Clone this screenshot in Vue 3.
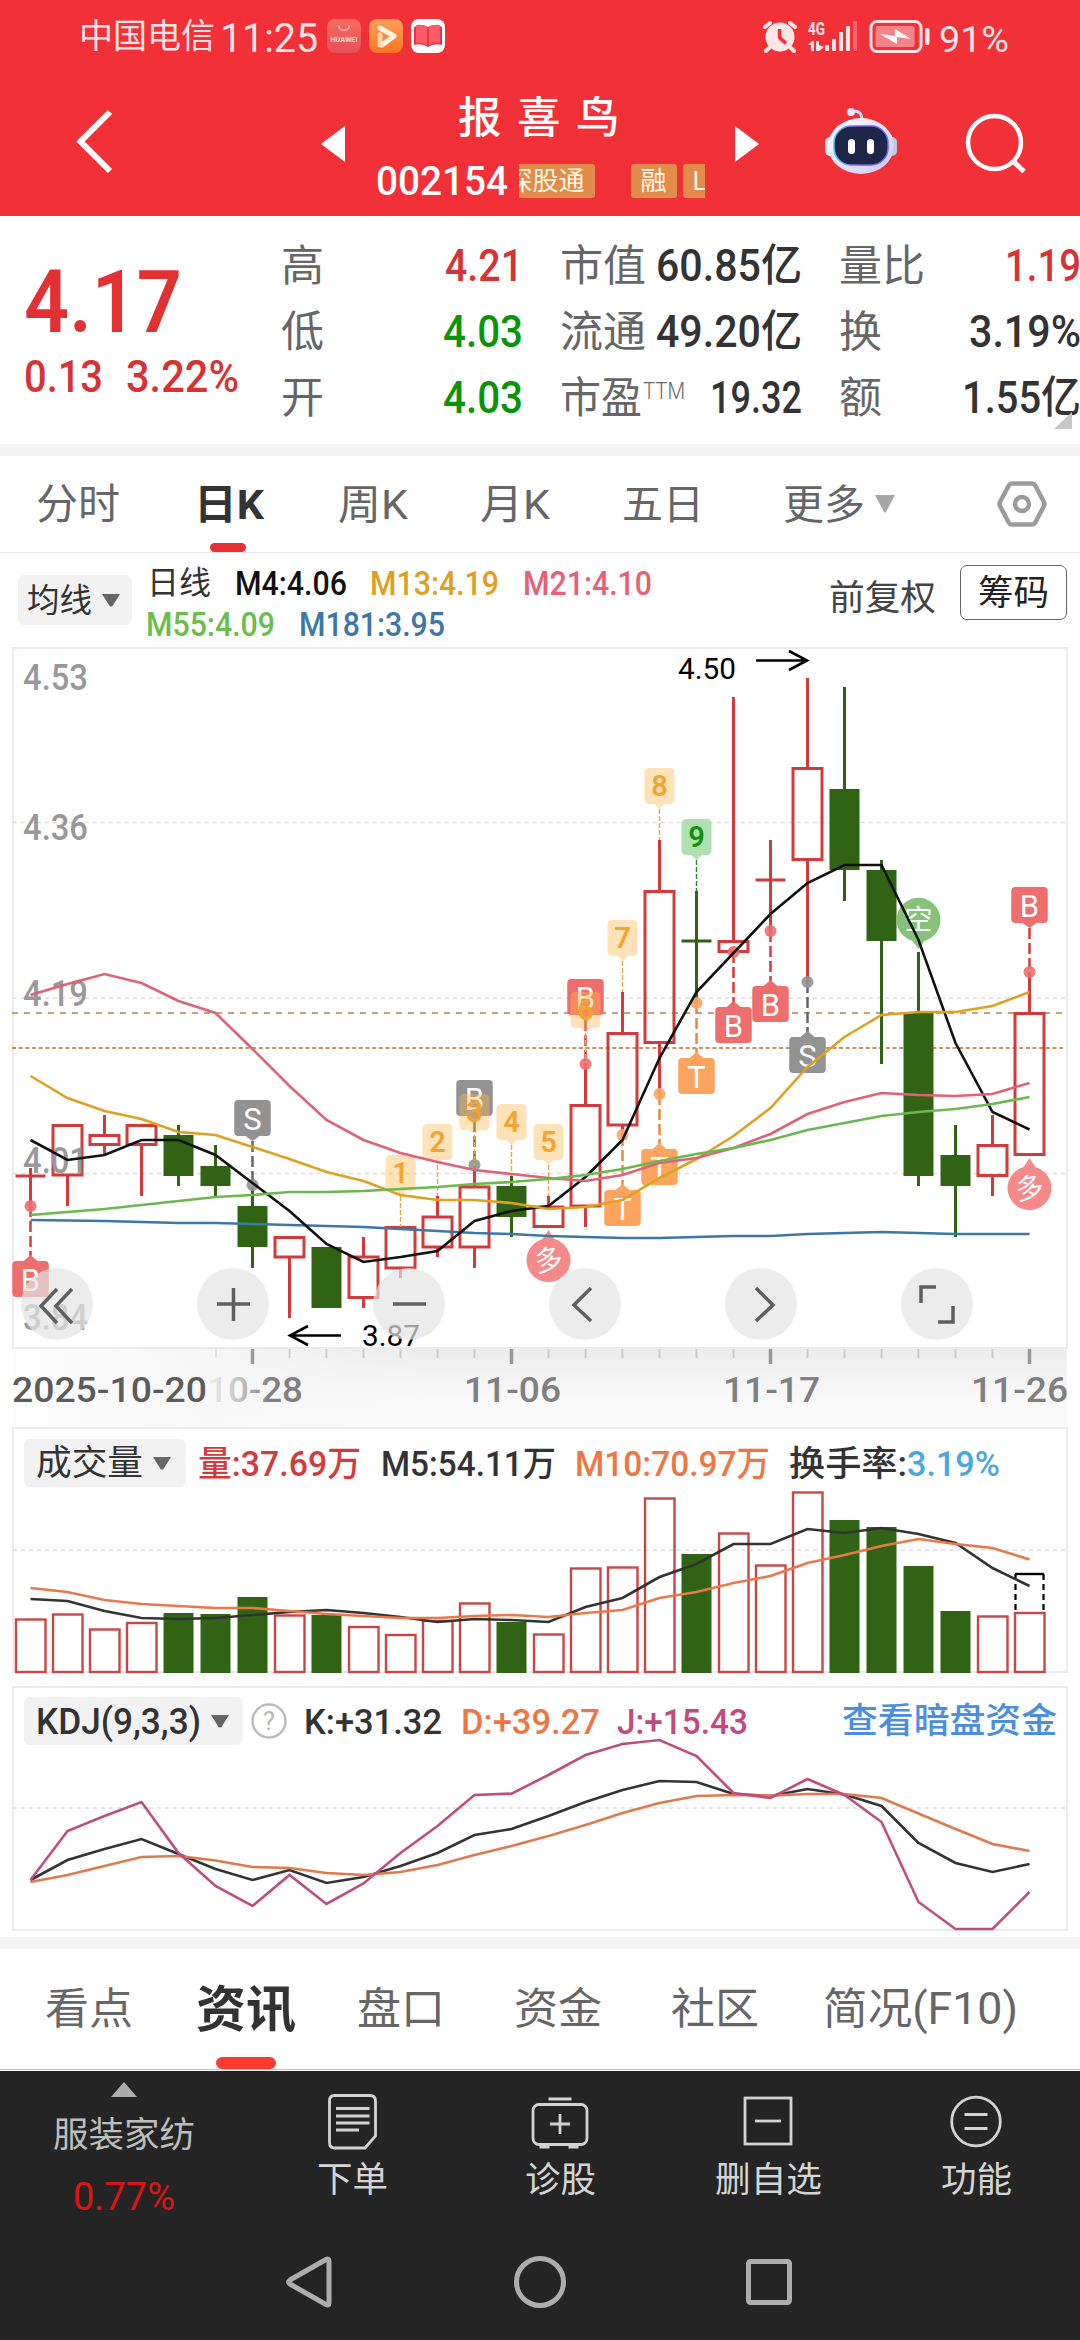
<script setup>
import { h } from 'vue'

// Single line of text fitted to a given width, centred on its cap height.
const Txt = (p) =>
  h('svg', { width: p.w, height: p.s, style: 'overflow:visible;flex:none;display:block' }, [
    h('text', {
      x: 0,
      y: p.s * 0.855,
      'font-size': p.s,
      'font-weight': p.b || 400,
      fill: p.c || 'currentColor',
      textLength: p.w,
      lengthAdjust: 'spacingAndGlyphs'
    }, p.t)
  ])

const X = (i) => 30.5 + 37 * i
const line = (ys) => ys.map((y, i) => (y === null ? '' : `${X(i)},${y}`)).join(' ')

// [kind, bodyTop, bodyBottom, high, low]
const candles = [
  ['d', 1176, 1176, 1168, 1206], ['r', 1125.5, 1175, 1125, 1206], ['r', 1135.5, 1144.5, 1115, 1154],
  ['r', 1125.5, 1144.5, 1125, 1196], ['g', 1135, 1176, 1125, 1186], ['g', 1166, 1186, 1145, 1196],
  ['g', 1206, 1247, 1187, 1268], ['r', 1237.5, 1257, 1237, 1318], ['g', 1247, 1308, 1247, 1308],
  ['r', 1257, 1297.5, 1237, 1308], ['r', 1227.5, 1268, 1227, 1278], ['r', 1217, 1247, 1196, 1257],
  ['r', 1187, 1247, 1166, 1268], ['g', 1186, 1217, 1176, 1237], ['r', 1207, 1226.5, 1196, 1227],
  ['r', 1105.5, 1206, 1063, 1227], ['r', 1033.5, 1125, 992, 1135], ['r', 891.5, 1042.5, 840, 1094],
  ['e', 941, 941, 891, 1003], ['r', 941.5, 951.5, 697, 952], ['d', 880, 880, 840, 931],
  ['r', 768.5, 859.5, 678, 982], ['g', 789, 870, 687, 901], ['g', 870, 941, 860, 1064],
  ['g', 1013, 1176, 952, 1186], ['g', 1155, 1186, 1125, 1237], ['r', 1145.5, 1175.5, 1115, 1196],
  ['r', 1013.5, 1154.5, 972, 1154]
]
const ma = [
  { c: '#3b78a8', y: [1220, 1220.5, 1221, 1222, 1223, 1223, 1224, 1225, 1226, 1227, 1229, 1231, 1233, 1234, 1236, 1237, 1238, 1238, 1237, 1236, 1236, 1234, 1233, 1232, 1233, 1234, 1234, 1234] },
  { c: '#111', y: [1140, 1160, 1155, 1140, 1140, 1155, 1183, 1211, 1244, 1262, 1257, 1251, 1221, 1211, 1206, 1177, 1140, 1058, 992, 953, 914, 883, 865, 865, 940, 1043, 1112, 1129.5] },
  { c: '#e0a020', y: [1076, 1098, 1111, 1119, 1132, 1135, 1147, 1159, 1172, 1181, 1195, 1200, 1200, 1203, 1209, 1207, 1200, 1178, 1159, 1136, 1108, 1067, 1037, 1015, 1012, 1012, 1006, 992] },
  { c: '#e06276', y: [995, 984, 974, 983, 1001, 1013, 1049, 1086, 1120, 1140, 1153, 1162, 1170, 1174, 1178, 1181, 1175, 1163, 1158, 1148, 1134, 1114, 1102, 1093, 1095, 1096, 1094, 1083] },
  { c: '#6bb84e', y: [1215, 1212, 1209, 1205, 1201, 1197, 1195, 1192, 1192, 1191, 1189, 1187, 1184, 1182, 1179, 1175, 1169, 1161, 1154, 1148, 1140, 1130, 1123, 1116, 1112, 1109, 1104, 1097] }
]

// signal tags: column, letter, colour, box top, dot y; box sits above the dot when its top is smaller
const signals = [
  [0, 'B', '#ee6e6e', 1261, 1206], [6, 'S', '#929292', 1100, 1185], [12, 'B', '#929292', 1080, 1165],
  [15, 'B', '#ee6e6e', 979, 1064], [16, 'T', '#fda55f', 1190, 1135], [17, 'T', '#fda55f', 1149, 1094],
  [18, 'T', '#fda55f', 1058, 1003], [19, 'B', '#ee6e6e', 1007, 952], [20, 'B', '#ee6e6e', 986, 931],
  [21, 'S', '#929292', 1037, 982], [27, 'B', '#ee6e6e', 887, 972]
]
const stemColor = { '#ee6e6e': '#d63a3a', '#929292': '#666', '#fda55f': '#e88a3c' }
const up = (s) => s[3] < s[4]
const counts = [
  [10, 1, 1155, 1227], [11, 2, 1124, 1196], [12, 3, 1094, 1166], [13, 4, 1104, 1176],
  [14, 5, 1124, 1196], [15, 6, 992, 1063], [16, 7, 920, 992], [17, 8, 768, 840], [18, 9, 819, 891]
]
const countPath = (i, y) => {
  const x = X(i)
  return `M${x - 10} ${y}h20q5 0 5 5v26q0 5 -5 5h-5l-5 5l-5 -5h-5q-5 0 -5 -5v-26q0 -5 5 -5z`
}
const priceLabels = [['4.53', 690], ['4.36', 840], ['4.19', 1006], ['4.01', 1173], ['3.84', 1330]]

const vol = [1619.5, 1614.5, 1629.5, 1623, 1613, 1614, 1597, 1615.5, 1615, 1627, 1635, 1621, 1603.5, 1622, 1634.5, 1568.5, 1567.5, 1498.5, 1554, 1533.5, 1565.5, 1492.5, 1520, 1527, 1566, 1611, 1616.5, 1613]
const m5 = [1599, 1601, 1611, 1618, 1619, 1618, 1615, 1612, 1610, 1613, 1617, 1622, 1619, 1620, 1622, 1607, 1598, 1577, 1564, 1544, 1544, 1529, 1533, 1528, 1534, 1543, 1568, 1586]
const m10 = [1588, 1592, 1600, 1604, 1606, 1608, 1608, 1611, 1614, 1616, 1618, 1618, 1616, 1615, 1617, 1613, 1610, 1598, 1592, 1583, 1576, 1563, 1555, 1546, 1539, 1544, 1548, 1559.5]
const kLine = [1880, 1860, 1849, 1839, 1854, 1869, 1880, 1870, 1883, 1877, 1866, 1853, 1835, 1829, 1816, 1802, 1790, 1781, 1782, 1794, 1796, 1789, 1794.5, 1806, 1843, 1863, 1872, 1864]
const dLine = [1882, 1875, 1866, 1857, 1856, 1860.5, 1867, 1868, 1873, 1875, 1872, 1865, 1855, 1846, 1836, 1825, 1813, 1803, 1796, 1795, 1795.6, 1794, 1794, 1798, 1813.5, 1829, 1844, 1851]
const jLine = [1880, 1831, 1816, 1802, 1853, 1886, 1906, 1875, 1904, 1883.5, 1853, 1826, 1795, 1793.6, 1775, 1755, 1744, 1740, 1756, 1793, 1798, 1779, 1795, 1822, 1902, 1929, 1929, 1892]

const ticks = Array.from({ length: 22 }, (_, k) => k + 6)
const tools = [
  'M36 21l-16 17l16 17M51 21l-16 17l16 17',
  'M20 36h33M36.500 20v33',
  'M20 36h33',
  'M42 20l-17 17l17 16',
  'M31 20l17 17l-17 16',
  'M20 35V19H35M52 38V54H37'
]
</script>

<template>
  <div class="screen">
    <header class="top">
      <div class="status">
        <Txt class="carrier" t="中国电信" :w="136" :s="34" />
        <Txt class="clock" t="11:25" :w="98" :s="40" />
        <svg class="apps" width="120" height="36" viewBox="0 0 120 36">
          <defs>
            <linearGradient id="hw" x1="0" y1="0" x2="0" y2="1"><stop offset="0" stop-color="#fb6a5f" /><stop offset="1" stop-color="#e4505a" /></linearGradient>
            <linearGradient id="vd" x1="0" y1="0" x2="0" y2="1"><stop offset="0" stop-color="#ffa057" /><stop offset="1" stop-color="#fb7425" /></linearGradient>
          </defs>
          <rect x="0" y="1" width="34" height="34" rx="8" fill="url(#hw)" />
          <path d="M11.500 7c0 7 11 7 11 0" fill="none" stroke="#ffc9c4" stroke-width="1.300" />
          <text x="3.500" y="23.500" textLength="27" lengthAdjust="spacingAndGlyphs" font-size="6.800" font-weight="700" fill="#ffd9d5">HUAWEI</text>
          <rect x="42" y="1" width="34" height="34" rx="8" fill="url(#vd)" />
          <path d="M53 10L67 18L55 27" fill="none" stroke="#fff3e4" stroke-width="5" stroke-linejoin="round" stroke-linecap="round" />
          <path d="M53 17v10" stroke="#ffd6ae" stroke-width="5" stroke-linecap="round" />
          <rect x="84" y="1" width="34" height="34" rx="8" fill="#fff" />
          <path d="M87 9q7 -4 14 0q7 -4 14 0v18q-8 -2 -14 2q-6 -4 -14 -2z" fill="#e03545" />
          <path d="M89 7q7 -1 12 2v19q-5 -4 -12 -3zM113 7q-7 -1 -12 2v19q5 -4 12 -3z" fill="#ff5a66" />
          <path d="M101 9v19" stroke="#d42f40" stroke-width="1.500" />
        </svg>
        <svg class="sys" width="168" height="36" viewBox="763 18 168 36" fill="#ffe6e7">
          <circle cx="780" cy="37" r="14.500" />
          <path d="M765 27l5 -4M795 27l-5 -4M769 48l-3 3M791 48l3 3" stroke="#ffe6e7" stroke-width="4" stroke-linecap="round" />
          <path d="M779.500 29v8.500l6.500 6" fill="none" stroke="#f13038" stroke-width="3.500" />
          <text x="808" y="35" font-size="18" font-weight="700" textLength="17" lengthAdjust="spacingAndGlyphs">4G</text>
          <path d="M808 45l4 -4h2v10h-3v-6zM816 41h3v4l5 2l-5 4h-3z" />
          <rect x="825" y="45" width="4" height="6" rx="1" /><rect x="832" y="39" width="4" height="12" rx="1" />
          <rect x="839" y="32" width="4" height="19" rx="1" /><rect x="846" y="26" width="4" height="25" rx="1" />
          <rect x="853" y="21" width="4" height="30" rx="1" opacity=".3" />
          <rect x="871" y="21.500" width="50" height="30" rx="6" fill="none" stroke="#ffe0e2" stroke-width="3" />
          <rect x="875.500" y="26" width="39" height="21" rx="2" fill="#f68388" />
          <path d="M880 34l15 2v-7l16 10l-14 -2v7z" fill="#fff" />
          <rect x="925" y="28" width="4.500" height="17" rx="2" />
        </svg>
        <Txt class="pct" t="91%" :w="70" :s="37" />
      </div>
      <div class="titlebar">
        <svg width="50" height="80" viewBox="70 101 50 80" class="back"><path d="M110 112L80.500 141.500L110 171" fill="none" stroke="#fff" stroke-width="6" /></svg>
        <svg class="prev" width="24" height="36"><path d="M0 18L24 0V36z" fill="#fff" /></svg>
        <div class="name">
          <div class="cn">报喜鸟</div>
          <div class="code">
            <Txt t="002154" :w="132" :s="41" :b="500" />
            <div class="badges">
              <span class="badge">深股通</span><span class="badge gap">融</span><span class="badge">LOF</span>
            </div>
          </div>
        </div>
        <svg class="next" width="24" height="36"><path d="M24 18L0 0V36z" fill="#fff" /></svg>
        <svg class="robot" width="74" height="70" viewBox="824 106 74 70">
          <defs>
            <linearGradient id="hd" x1="0" y1="0" x2="1" y2="1"><stop offset="0" stop-color="#fff" /><stop offset="1" stop-color="#cbc8f0" /></linearGradient>
            <linearGradient id="rim" x1="0" y1="0" x2="1" y2="0"><stop offset="0" stop-color="#58c6f5" /><stop offset=".5" stop-color="#8a54e8" /><stop offset="1" stop-color="#5b6cf0" /></linearGradient>
          </defs>
          <path d="M851 112q10 -3 11 7" fill="none" stroke="#e2dcf6" stroke-width="3" /><circle cx="851" cy="112" r="4" fill="#eee6fa" />
          <rect x="825" y="137" width="10" height="19" rx="5" fill="#dfe4fb" /><rect x="887" y="137" width="10" height="19" rx="5" fill="#bcc6f2" />
          <ellipse cx="861" cy="146" rx="33" ry="28" fill="url(#hd)" />
          <rect x="834" y="126" width="54" height="39" rx="17" fill="#1d2647" stroke="url(#rim)" stroke-width="1.500" />
          <rect x="848" y="139" width="7" height="15" rx="3.500" fill="#fff" /><rect x="867" y="139" width="7" height="15" rx="3.500" fill="#fff" />
        </svg>
        <svg class="search" width="64" height="64" viewBox="964 111 64 64" fill="none" stroke="#fff" stroke-width="4.500"><ellipse cx="994.500" cy="142.500" rx="26.500" ry="26.500" /><path d="M1013 161L1024 171.500" stroke-width="5" /></svg>
      </div>
    </header>

    <section class="quote">
      <div class="last">
        <Txt t="4.17" :w="158" :s="88" :b="600" c="#e33033" />
        <div class="chg"><Txt t="0.13" :w="79" :s="44" :b="500" /><Txt t="3.22%" :w="113" :s="44" :b="500" /></div>
      </div>
      <dl class="c1">
        <div><Txt t="高" :w="43" :s="43" /><Txt t="4.21" :w="78" :s="44" :b="500" c="#d63434" /></div>
        <div><Txt t="低" :w="43" :s="43" /><Txt t="4.03" :w="80" :s="44" :b="500" c="#0a940a" /></div>
        <div><Txt t="开" :w="43" :s="43" /><Txt t="4.03" :w="80" :s="44" :b="500" c="#0a940a" /></div>
      </dl>
      <dl class="c2">
        <div><Txt t="市值" :w="86" :s="43" /><Txt t="60.85亿" :w="146" :s="44" :b="500" c="#333" /></div>
        <div><Txt t="流通" :w="86" :s="43" /><Txt t="49.20亿" :w="146" :s="44" :b="500" c="#333" /></div>
        <div><Txt t="市盈" :w="82" :s="43" /><Txt class="ttm" t="TTM" :w="42" :s="23" :b="300" /><Txt t="19.32" :w="92" :s="44" :b="500" c="#333" /></div>
      </dl>
      <dl class="c3">
        <div><Txt t="量比" :w="86" :s="43" /><Txt t="1.19" :w="76" :s="44" :b="500" c="#d63434" /></div>
        <div><Txt t="换" :w="43" :s="43" /><Txt t="3.19%" :w="112" :s="44" :b="500" c="#333" /></div>
        <div><Txt t="额" :w="43" :s="43" /><Txt t="1.55亿" :w="119" :s="44" :b="500" c="#333" /></div>
      </dl>
      <i class="corner"></i>
    </section>

    <nav class="periods">
      <Txt t="分时" :w="84" :s="42" />
      <div class="on"><Txt t="日K" :w="70" :s="41" :b="700" c="#333" /></div>
      <Txt t="周K" :w="70" :s="41" />
      <Txt t="月K" :w="70" :s="41" />
      <Txt t="五日" :w="82" :s="41" />
      <Txt t="更多" :w="82" :s="41" />
      <svg class="caret" width="22" height="18"><path d="M1 0H21L12 17q-1 1 -2 0z" fill="#a6a6a6" /></svg>
      <svg class="gear" width="50" height="50" viewBox="995 479 50 50" fill="none" stroke="#9b9b9b" stroke-width="4.500" stroke-linejoin="round"><path d="M1010 483.500h20q2 0 3 1.500l9 17q1 2 0 4l-9 17q-1 1.500 -3 1.500h-20q-2 0 -3 -1.500l-9 -17q-1 -2 0 -4l9 -17q1 -1.500 3 -1.500z" /><circle cx="1020" cy="504" r="7" /></svg>
    </nav>

    <section class="indicators">
      <div class="pick ma"><Txt t="均线" :w="65" :s="32.500" /><svg width="18" height="13"><path d="M0 0H18L10.500 12q-1.500 1 -3 0z" fill="#666" /></svg></div>
      <div class="values">
        <div class="vr">
          <Txt t="日线" :w="64" :s="31.500" c="#333" />
          <Txt t="M4:4.06" :w="112" :s="34" :b="500" c="#111" />
          <Txt t="M13:4.19" :w="129" :s="34" :b="500" c="#e0a01f" />
          <Txt t="M21:4.10" :w="129" :s="34" :b="500" c="#e95f77" />
        </div>
        <div class="vr two">
          <Txt t="M55:4.09" :w="129" :s="34" :b="500" c="#6bbd4c" />
          <Txt t="M181:3.95" :w="146" :s="34" :b="500" c="#3b78a8" />
        </div>
      </div>
      <Txt class="adj" t="前复权" :w="107" :s="35.500" c="#444" />
      <div class="chip"><Txt t="筹码" :w="71" :s="35.500" c="#222" /></div>
    </section>

    <section class="panel">
      <svg width="1080" height="781" viewBox="0 646 1080 781">
        <defs>
          <linearGradient id="axis" x1="0" y1="0" x2="0" y2="1"><stop offset="0" stop-color="#ececec" /><stop offset=".6" stop-color="#f8f8f8" /><stop offset="1" stop-color="#fbfbfb" /></linearGradient>
          <linearGradient id="veil" x1="0" y1="0" x2="1" y2="0"><stop offset="0" stop-color="#fcfcfc" /><stop offset=".45" stop-color="#f8f8f8" stop-opacity=".9" /><stop offset="1" stop-color="#f6f6f6" stop-opacity="0" /></linearGradient>
          <linearGradient id="fade" gradientUnits="userSpaceOnUse" x1="208" y1="0" x2="270" y2="0"><stop offset="0" stop-color="#eee" /><stop offset=".5" stop-color="#c4c4c4" /><stop offset="1" stop-color="#808080" /></linearGradient>
        </defs>
        <rect x="13" y="1348" width="1054" height="79" fill="url(#axis)" />
        <rect x="13" y="1349" width="420" height="78" fill="url(#veil)" />
        <rect x="13" y="648" width="1054" height="700" fill="none" stroke="#ebebeb" stroke-width="2" />
        <g stroke="#dedede" stroke-width="1.300" stroke-dasharray="4 4"><path d="M13 822.500H1066M13 998H1066M13 1173.500H1066" /></g>
        <path d="M12 1013H1065" stroke="#c3a472" stroke-width="2" stroke-dasharray="6 6" />
        <path d="M12 1048H1066" stroke="#c9935a" stroke-width="2" stroke-dasharray="4 2.670" />

        <g v-for="(c, i) in candles" :key="i" :stroke="'rd'.includes(c[0]) ? '#d13b3b' : '#306414'" stroke-width="3" fill="none">
          <template v-if="c[0] === 'r'">
            <path :d="`M${X(i)} ${c[3]}V${c[1]}M${X(i)} ${c[2]}V${Math.max(c[2], c[4])}`" />
            <rect :x="X(i) - 14.500" :y="c[1]" width="29" :height="c[2] - c[1]" />
          </template>
          <template v-else>
            <path :d="`M${X(i)} ${c[3]}V${c[4]}`" />
            <rect v-if="c[0] === 'g'" :x="X(i) - 15" :y="c[1]" width="30" :height="c[2] - c[1]" fill="#306414" stroke="none" />
            <path v-else :d="`M${X(i) - 15} ${c[1]}h30`" />
          </template>
        </g>

        <g font-size="36" font-weight="500" fill="#999">
          <text v-for="l in priceLabels" :key="l[0]" x="23" :y="l[1]" textLength="65" lengthAdjust="spacingAndGlyphs">{{ l[0] }}</text>
        </g>

        <g v-for="(s, k) in signals" :key="'s' + k">
          <path :d="up(s) ? `M${X(s[0])} ${s[3] + 41}V${s[4]}` : `M${X(s[0])} ${s[4]}V${s[3] - 5}`" :stroke="stemColor[s[2]]" stroke-width="2.500" stroke-dasharray="11 4" />
          <circle :cx="X(s[0])" :cy="s[4]" r="6" :fill="s[2]" opacity=".9" />
          <rect :x="X(s[0]) - 18.250" :y="s[3]" width="36.500" height="36" rx="4" :fill="s[2]" />
          <path :d="up(s) ? `M${X(s[0]) - 7} ${s[3] + 36}l7 5l7 -5z` : `M${X(s[0]) - 7} ${s[3]}l7 -6l7 6z`" :fill="s[2]" />
          <text :x="X(s[0])" :y="s[3] + 30" text-anchor="middle" font-size="31" fill="#fff">{{ s[1] }}</text>
        </g>
        <g v-for="n in counts" :key="'n' + n[1]">
          <path :d="`M${X(n[0])} ${n[2] + 41}V${n[3]}`" :stroke="n[1] === 9 ? '#1f8a2a' : '#e0aa4a'" stroke-width="1.400" stroke-dasharray="5 2" />
          <path :d="countPath(n[0], n[2])" :fill="n[1] === 9 ? '#b0dfb0' : '#ffb74d'" :fill-opacity="n[1] === 9 ? 1 : 0.4" />
          <text :x="X(n[0])" :y="n[2] + 28" text-anchor="middle" font-size="29" font-weight="600" :fill="n[1] === 9 ? '#0e930e' : '#f2a42e'">{{ n[1] }}</text>
        </g>

        <g font-size="28" fill="#fff" text-anchor="middle">
          <path d="M918.500 949l-6 -8a22 22 0 1 1 12 0z" fill="#86c27a" />
          <text x="918.500" y="930">空</text>
          <g fill="#f58a8a"><path d="M548.500 1230l-6 9a22 22 0 1 0 12 0z" /><path d="M1029.500 1158l-6 9a22 22 0 1 0 12 0z" /></g>
          <text x="548.500" y="1270" transform="rotate(-10 548.500 1260)">多</text>
          <text x="1029.500" y="1198" transform="rotate(-10 1029.500 1188)">多</text>
        </g>

        <polyline v-for="m in ma" :key="m.c" :points="line(m.y)" fill="none" :stroke="m.c" stroke-width="2.600" />

        <g font-size="30" fill="#000">
          <text x="678" y="679" textLength="58" lengthAdjust="spacingAndGlyphs">4.50</text>
          <text x="362" y="1346" textLength="58" lengthAdjust="spacingAndGlyphs">3.87</text>
        </g>
        <path d="M756 660.500H807M789 651L807 660.500L789 670M341 1335.500H290M308 1326L290 1335.500L308 1345" fill="none" stroke="#000" stroke-width="2.600" />

        <path d="M216 1349v9" stroke="#e4e4e4" stroke-width="2" />
        <path v-for="i in ticks" :key="'t' + i" :d="`M${X(i)} 1349v${(i - 6) % 7 ? 9 : 15}`" :stroke="(i - 6) % 7 ? '#ccc' : '#999'" :stroke-width="(i - 6) % 7 ? 2 : 3.500" />
        <g font-size="35.500" font-weight="500" fill="#808080">
          <text x="12" y="1402" textLength="195" lengthAdjust="spacingAndGlyphs" fill="#5c5c5c">2025-10-20</text>
          <text x="207" y="1402" textLength="96" lengthAdjust="spacingAndGlyphs" fill="url(#fade)">10-28</text>
          <text x="464" y="1402" textLength="97" lengthAdjust="spacingAndGlyphs">11-06</text>
          <text x="723" y="1402" textLength="97" lengthAdjust="spacingAndGlyphs">11-17</text>
          <text x="971" y="1402" textLength="97" lengthAdjust="spacingAndGlyphs">11-26</text>
        </g>
      </svg>
      <div class="tools">
        <button v-for="(d, i) in tools" :key="i"><svg width="72" height="72"><path :d="d" fill="none" stroke="#5f5f5f" stroke-width="3.500" /></svg></button>
      </div>
    </section>

    <section class="panel">
      <svg width="1080" height="259" viewBox="0 1427 1080 259" fill="none">
        <rect x="13" y="1428" width="1054" height="244" stroke="#ebebeb" stroke-width="2" />
        <path d="M13 1550H1066" stroke="#e6e6e6" stroke-width="1.800" stroke-dasharray="4 4" />
        <template v-for="(y, i) in vol" :key="i">
          <rect v-if="candles[i][0] === 'g' || candles[i][0] === 'e'" :x="X(i) - 15" :y="y" width="30" :height="1673 - y" fill="#306414" />
          <rect v-else :x="X(i) - 14.500" :y="y" width="29.500" :height="1672 - y" stroke="#c94646" stroke-width="2.400" />
        </template>
        <path d="M1015.500 1574V1612M1043.500 1574V1612" stroke="#000" stroke-width="2.200" stroke-dasharray="6 4" /><path d="M1015 1574h29" stroke="#000" stroke-width="2.400" />
        <polyline :points="line(m5)" stroke="#333" stroke-width="2.600" />
        <polyline :points="line(m10)" stroke="#e9784a" stroke-width="2.600" />
      </svg>
      <div class="head">
        <div class="pick v"><Txt t="成交量" :w="107" :s="35.500" /><svg width="18" height="13"><path d="M0 0H18L10.500 12q-1.500 1 -3 0z" fill="#666" /></svg></div>
        <Txt class="g12" t="量:37.69万" :w="163" :s="35" :b="500" c="#d23b3b" />
        <Txt class="g20" t="M5:54.11万" :w="175" :s="35" :b="500" c="#333" />
        <Txt class="g19" t="M10:70.97万" :w="195" :s="35" :b="500" c="#ee7645" />
        <Txt class="g19" t="换手率:" :w="118" :s="35" :b="500" c="#333" />
        <Txt t="3.19%" :w="93" :s="35" :b="500" c="#4aa8e0" />
      </div>
    </section>

    <section class="panel kdj">
      <svg width="1080" height="251" viewBox="0 1686 1080 251" fill="none">
        <rect x="13" y="1687" width="1054" height="243" stroke="#ebebeb" stroke-width="2" />
        <path d="M13 1808H1066" stroke="#e6e6e6" stroke-width="1.800" stroke-dasharray="4 4" />
        <g stroke-width="2.600"><polyline :points="line(kLine)" stroke="#333" /><polyline :points="line(dLine)" stroke="#e07a4c" /><polyline :points="line(jLine)" stroke="#bf4d80" /></g>
      </svg>
      <div class="head">
        <div class="pick k"><Txt t="KDJ(9,3,3)" :w="165" :s="36" :b="500" /><svg width="18" height="13"><path d="M0 0H18L10.500 12q-1.500 1 -3 0z" fill="#666" /></svg></div>
        <svg class="help" width="36" height="36"><circle cx="18" cy="18" r="16.500" fill="none" stroke="#bdbdbd" stroke-width="2.500" /><text x="18" y="27" text-anchor="middle" font-size="25" fill="#b5b5b5">?</text></svg>
        <Txt class="g16" t="K:+31.32" :w="138" :s="35" :b="500" c="#333" />
        <Txt class="g19" t="D:+39.27" :w="139" :s="35" :b="500" c="#ee7645" />
        <Txt class="g16" t="J:+15.43" :w="131" :s="35" :b="500" c="#c24a80" />
        <Txt class="more" t="查看暗盘资金" :w="215" :s="35.500" :b="500" c="#4b8ede" />
      </div>
    </section>

    <nav class="sections">
      <Txt t="看点" :w="88" :s="43.500" />
      <div class="on"><Txt t="资讯" :w="100" :s="50" :b="700" c="#333" /></div>
      <Txt t="盘口" :w="88" :s="43.500" />
      <Txt t="资金" :w="88" :s="43.500" />
      <Txt t="社区" :w="88" :s="43.500" />
      <Txt t="简况(F10)" :w="195" :s="43.500" />
    </nav>

    <footer class="dock">
      <div class="actions">
        <div class="sector">
          <svg width="26" height="15"><path d="M0 15L13 0L26 15z" fill="#acacac" /></svg>
          <Txt t="服装家纺" :w="142" :s="35.500" c="#bdbdbd" />
          <Txt t="0.77%" :w="102" :s="39" c="#dc1414" />
        </div>
        <div class="act">
          <svg width="60" height="60" viewBox="322 2090 60 60" fill="none" stroke="#d2d2d2" stroke-width="2.800"><path d="M334.500 2095.500H370q5.500 0 5.500 5.500V2136L365 2148H334.500q-5 0 -5 -5.500V2101q0 -5.500 5 -5.500z" /><path d="M336 2108.500h33.500M336 2116h33.500M336 2123h33.500M336 2130h23" /></svg>
          <Txt t="下单" :w="71" :s="35.500" />
        </div>
        <div class="act">
          <svg width="60" height="60" viewBox="529.500 2090 60 60" fill="none" stroke="#d2d2d2" stroke-width="2.800"><rect x="532.500" y="2104.500" width="54" height="40" rx="6" /><path d="M548 2099h23M549.500 2124h20M559.500 2114v20M539 2147h10M568 2147h10" /></svg>
          <Txt t="诊股" :w="71" :s="35.500" />
        </div>
        <div class="act">
          <svg width="60" height="60" viewBox="737 2090 60 60" fill="none" stroke="#d2d2d2" stroke-width="2.800"><rect x="744" y="2098" width="46" height="46" /><path d="M754 2121h26" /></svg>
          <Txt t="删自选" :w="107" :s="35.500" />
        </div>
        <div class="act">
          <svg width="60" height="60" viewBox="945.500 2090 60 60" fill="none" stroke="#d2d2d2" stroke-width="2.800"><circle cx="975.500" cy="2121.500" r="24.300" /><path d="M964 2114.500h23M964 2128.500h23" /></svg>
          <Txt t="功能" :w="71" :s="35.500" />
        </div>
      </div>
      <div class="keys">
        <svg width="60" height="60" viewBox="-6 0 60 60"><path d="M39 7.500q3 -1.500 3 1.500V51q0 3 -3 1.500L3 32q-3 -2 0 -4z" /></svg>
        <svg width="60" height="60" viewBox="0 0 60 60"><circle cx="30" cy="30" r="23.500" /></svg>
        <svg width="60" height="60" viewBox="0 0 60 60"><rect x="9.500" y="9.500" width="41" height="41" rx="2" /></svg>
      </div>
    </footer>
  </div>
</template>

<style>
body { margin: 0; background: #fff; }
</style>

<style scoped>
.screen {
  width: 1080px;
  height: 2340px;
  overflow: hidden;
  background: #fff;
  font-family: Roboto, "Noto Sans CJK SC", sans-serif;
  color: #666;
}
svg { display: block; flex: none; }
.top { height: 216px; background: #f13038; color: #fff; }
.status { height: 72px; display: flex; align-items: center; color: #ffe3e5; }
.carrier { margin-left: 79px; }
.clock { margin-left: 5px; margin-top: 4px; }
.apps { margin-left: 9px; }
.sys { margin-left: 316px; }
.pct { margin-left: 8px; margin-top: 4px; }
.titlebar { height: 144px; display: flex; align-items: center; }
.back { margin-left: 70px; margin-top: -6px; }
.prev { margin-left: 201px; }
.name { width: 330px; margin-left: 31px; margin-right: 29px; align-self: flex-start; }
.cn { height: 84px; line-height: 94px; font-size: 43.5px; letter-spacing: 15.5px; font-weight: 500; padding-left: 82px; }
.code { display: flex; align-items: center; height: 49px; }
.badges { display: flex; width: 186px; margin-left: 11px; overflow: hidden; }
.badge { flex: none; height: 34px; line-height: 34px; padding: 0 10px; border-radius: 3px; background: #e38b49; color: #fff7e6; font-size: 26px; }
.badge:first-child { margin-left: -22.5px; }
.badge + .badge { margin-left: 6px; }
.badge.gap { margin-left: 36px; }
.robot { margin-left: 65px; margin-top: -6px; }
.search { margin-left: 66px; margin-top: -2px; }

.quote { height: 196px; padding: 16px 0 16px 24px; display: flex; position: relative; }
.last { flex: none; width: 257px; padding-top: 25px; box-sizing: border-box; }
.chg { display: flex; gap: 23px; margin-top: 9px; color: #d63434; }
dl { margin: 0; flex: none; }
dl > div { height: 66px; display: flex; align-items: center; justify-content: space-between; }
.c1 { width: 242px; }
.c2 { width: 242px; margin-left: 37px; }
.c3 { width: 242px; margin-left: 37px; }
.ttm { margin: -14px auto 0 1px; }
.corner { position: absolute; right: 8px; bottom: 15px; border-left: 18px solid transparent; border-bottom: 17px solid #c8c8c8; }

.periods { height: 96px; border-top: 12px solid #f4f4f4; border-bottom: 1px solid #e5e5e5; display: flex; align-items: center; }
.periods > :nth-child(1) { margin-left: 36px; }
.periods > .on { margin-left: 74px; }
.periods > :nth-child(3) { margin-left: 74px; }
.periods > :nth-child(4) { margin-left: 72px; }
.periods > :nth-child(5) { margin-left: 72px; }
.periods > :nth-child(6) { margin-left: 79px; }
.caret { margin-left: 9px; }
.gear { margin-left: 101px; }
.on { align-self: stretch; display: flex; align-items: center; position: relative; }
.on::after { content: ""; position: absolute; left: 50%; bottom: 0; width: 36px; height: 9px; margin-left: -19px; border-radius: 5px; background: #e33033; }

.indicators { height: 93px; display: flex; align-items: flex-start; }
.indicators > * { margin-top: 22px; }
.pick { display: flex; align-items: center; gap: 10px; box-sizing: border-box; height: 48px; border-radius: 6px; background: #f2f2f2; color: #333; }
.pick.ma { margin-left: 18px; width: 114px; height: 50px; padding-left: 9px; }
.indicators > .values { margin: 9px 0 0 15px; width: 667px; }
.vr { height: 41px; display: flex; align-items: center; gap: 23.5px; }
.vr.two { gap: 24px; margin-left: -1px; }
.indicators > .adj { margin: 27px 0 0 15px; }
.indicators > .chip { margin: 12px 0 0 24px; width: 107px; height: 55px; border: 1.5px solid #666; border-radius: 7px; box-sizing: border-box; display: flex; align-items: center; justify-content: center; }

.panel { display: grid; }
.panel > * { grid-area: 1 / 1; }
.tools { display: flex; gap: 104px; margin: 622px 0 0 21px; align-self: start; }
.tools button { width: 72px; height: 72px; padding: 0; border: 0; border-radius: 50%; background: rgba(228, 228, 228, .7); }
.head { display: flex; align-items: center; height: 48px; margin: 12px 0 0 24px; align-self: start; }
.kdj .head { margin-top: 11px; }
.pick.v { width: 162px; padding-left: 12px; }
.pick.k { width: 219px; padding-left: 12px; }
.help { margin-left: 8px; }
.g12 { margin-left: 12px; }
.g16 { margin-left: 17px; }
.g19 { margin-left: 19px; }
.g20 { margin-left: 20px; }
.more { margin-left: 94px; }

.sections { height: 120px; border-top: 12px solid #f4f4f4; border-bottom: 1px solid #c4c4c4; display: flex; align-items: center; }
.sections > :nth-child(1) { margin-left: 45px; }
.sections > .on { margin-left: 63px; }
.sections > .on::after { width: 60px; height: 12px; margin-left: -30px; border-radius: 6px; background: #fb3a30; }
.sections > :nth-child(3) { margin-left: 61px; }
.sections > :nth-child(4) { margin-left: 69px; }
.sections > :nth-child(5) { margin-left: 69px; }
.sections > :nth-child(6) { margin-left: 64px; }

.dock { margin-top: 1px; height: 269px; background: #242424; color: #d4d4d4; }
.actions { display: flex; height: 152px; }
.sector { width: 248px; padding-top: 11px; display: flex; flex-direction: column; align-items: center; }
.sector > :nth-child(2) { margin-top: 20px; }
.sector > :nth-child(3) { margin-top: 24px; }
.act { width: 208px; padding-top: 19px; display: flex; flex-direction: column; align-items: center; gap: 12px; }
.keys { display: flex; justify-content: center; gap: 169px; padding-top: 29px; fill: none; stroke: #adadad; stroke-width: 5; }
</style>
